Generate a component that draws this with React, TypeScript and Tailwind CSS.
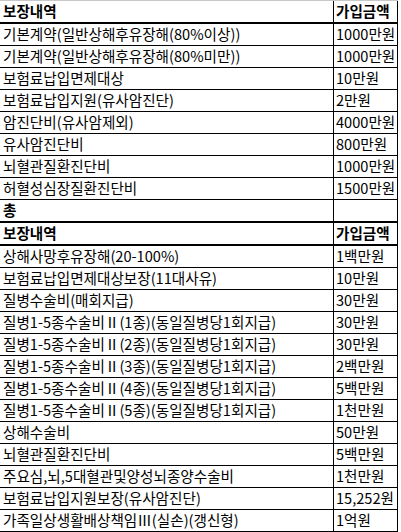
import React from "react";

type Row = { l: string; r: string; bold?: boolean; thick?: boolean };

const rows: Row[] = [
  { l: "보장내역", r: "가입금액", bold: true, thick: true },
  { l: "기본계약(일반상해후유장해(80%이상))", r: "1000만원" },
  { l: "기본계약(일반상해후유장해(80%미만))", r: "1000만원" },
  { l: "보험료납입면제대상", r: "10만원" },
  { l: "보험료납입지원(유사암진단)", r: "2만원" },
  { l: "암진단비(유사암제외)", r: "4000만원" },
  { l: "유사암진단비", r: "800만원" },
  { l: "뇌혈관질환진단비", r: "1000만원" },
  { l: "허혈성심장질환진단비", r: "1500만원" },
  { l: "총", r: "", bold: true, thick: true },
  { l: "보장내역", r: "가입금액", bold: true, thick: true },
  { l: "상해사망후유장해(20-100%)", r: "1백만원" },
  { l: "보험료납입면제대상보장(11대사유)", r: "10만원" },
  { l: "질병수술비(매회지급)", r: "30만원" },
  { l: "질병1-5종수술비Ⅱ(1종)(동일질병당1회지급)", r: "30만원" },
  { l: "질병1-5종수술비Ⅱ(2종)(동일질병당1회지급)", r: "30만원" },
  { l: "질병1-5종수술비Ⅱ(3종)(동일질병당1회지급)", r: "2백만원" },
  { l: "질병1-5종수술비Ⅱ(4종)(동일질병당1회지급)", r: "5백만원" },
  { l: "질병1-5종수술비Ⅱ(5종)(동일질병당1회지급)", r: "1천만원" },
  { l: "상해수술비", r: "50만원" },
  { l: "뇌혈관질환진단비", r: "5백만원" },
  { l: "주요심,뇌,5대혈관및양성뇌종양수술비", r: "1천만원" },
  { l: "보험료납입지원보장(유사암진단)", r: "15,252원" },
  { l: "가족일상생활배상책임Ⅲ(실손)(갱신형)", r: "1억원" },
];

export default function App() {
  return (
    <div
      className="w-[401px] h-[532px] bg-white text-black overflow-hidden"
      style={{ fontFamily: '"Noto Sans CJK KR", "Noto Sans", sans-serif' }}
    >
      <div className="w-[398px] border-t border-[#c8c8c8]">
        {rows.map((row, i) => (
          <div
            key={i}
            className={
              row.thick
                ? "flex h-[23px] border-b-2 border-black"
                : "flex h-[22px] border-b border-black"
            }
          >
            <div
              className={
                row.bold
                  ? "w-[334px] border-r border-black flex items-center pl-[3px] text-[14.6px] leading-none font-bold whitespace-nowrap"
                  : "w-[334px] border-r border-black flex items-center pl-[3px] text-[14.6px] leading-none whitespace-nowrap"
              }
            >
              {row.l}
            </div>
            <div
              className={
                row.bold
                  ? "w-[64px] border-r border-black flex items-center pl-[2px] text-[14.6px] leading-none font-bold whitespace-nowrap"
                  : "w-[64px] border-r border-black flex items-center pl-[2px] text-[14.6px] leading-none whitespace-nowrap"
              }
            >
              {row.r}
            </div>
          </div>
        ))}
      </div>
    </div>
  );
}
